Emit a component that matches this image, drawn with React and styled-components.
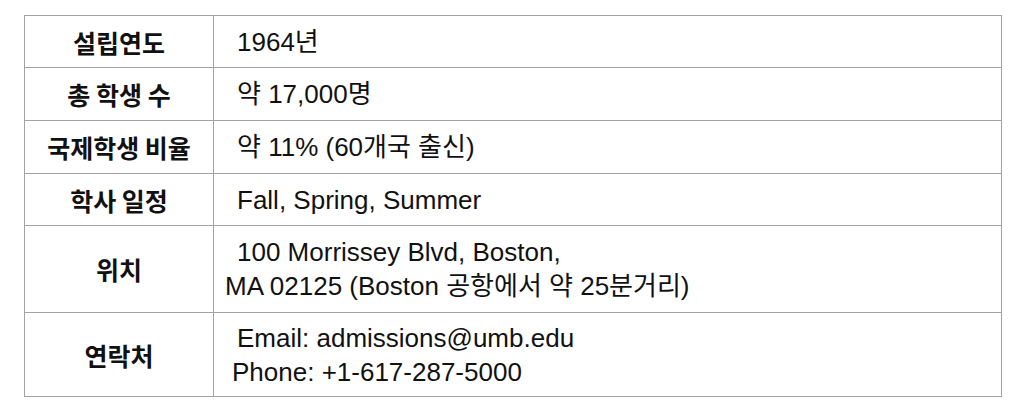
import React from "react";
import styled, { createGlobalStyle } from "styled-components";

const GlobalStyle = createGlobalStyle`
  html, body {
    margin: 0;
    padding: 0;
    background: #ffffff;
  }
  body {
    font-family: "Liberation Sans", "Noto Sans CJK KR", Arial, sans-serif;
    color: #111111;
  }
`;

const Page = styled.div`
  width: 1024px;
  height: 413px;
  padding: 15px 0 0 24px;
  box-sizing: border-box;
`;

const Table = styled.table`
  width: 978px;
  border-collapse: collapse;
  table-layout: fixed;
`;

const Row = styled.tr`
  height: ${props => props.height}px;
`;

const Label = styled.th`
  width: 188px;
  border: 1px solid #a3a3a3;
  padding: 0;
  text-align: center;
  vertical-align: middle;
  font-family: "Noto Sans CJK KR", "Liberation Sans", sans-serif;
  font-size: 25px;
  font-weight: 700;
  color: #111111;
`;

const Value = styled.td`
  border: 1px solid #a3a3a3;
  padding: 0 0 0 11px;
  vertical-align: middle;
  font-size: 26px;
  line-height: 34px;
  color: #111111;
`;

const Line = styled.div`
  padding-left: ${props => props.indent || 0}px;
  white-space: nowrap;
`;

const rows = [
  { label: "설립연도", height: 52, lines: [{ text: "1964년", indent: 12 }] },
  { label: "총 학생 수", height: 53, lines: [{ text: "약 17,000명", indent: 12 }] },
  { label: "국제학생 비율", height: 53, lines: [{ text: "약 11% (60개국 출신)", indent: 12 }] },
  { label: "학사 일정", height: 52, lines: [{ text: "Fall, Spring, Summer", indent: 12 }] },
  {
    label: "위치",
    height: 87,
    lines: [
      { text: "100 Morrissey Blvd, Boston,", indent: 12 },
      { text: "MA 02125 (Boston 공항에서 약 25분거리)", indent: 0 },
    ],
  },
  {
    label: "연락처",
    height: 84,
    lines: [
      { text: "Email: admissions@umb.edu", indent: 12 },
      { text: "Phone: +1-617-287-5000", indent: 7 },
    ],
  },
];

const App = () => {
  return (
    <Page>
      <GlobalStyle />
      <Table>
        <tbody>
          {rows.map(row => (
            <Row key={row.label} height={row.height}>
              <Label>{row.label}</Label>
              <Value>
                {row.lines.map(line => (
                  <Line key={line.text} indent={line.indent}>
                    {line.text}
                  </Line>
                ))}
              </Value>
            </Row>
          ))}
        </tbody>
      </Table>
    </Page>
  );
};

export default App;
